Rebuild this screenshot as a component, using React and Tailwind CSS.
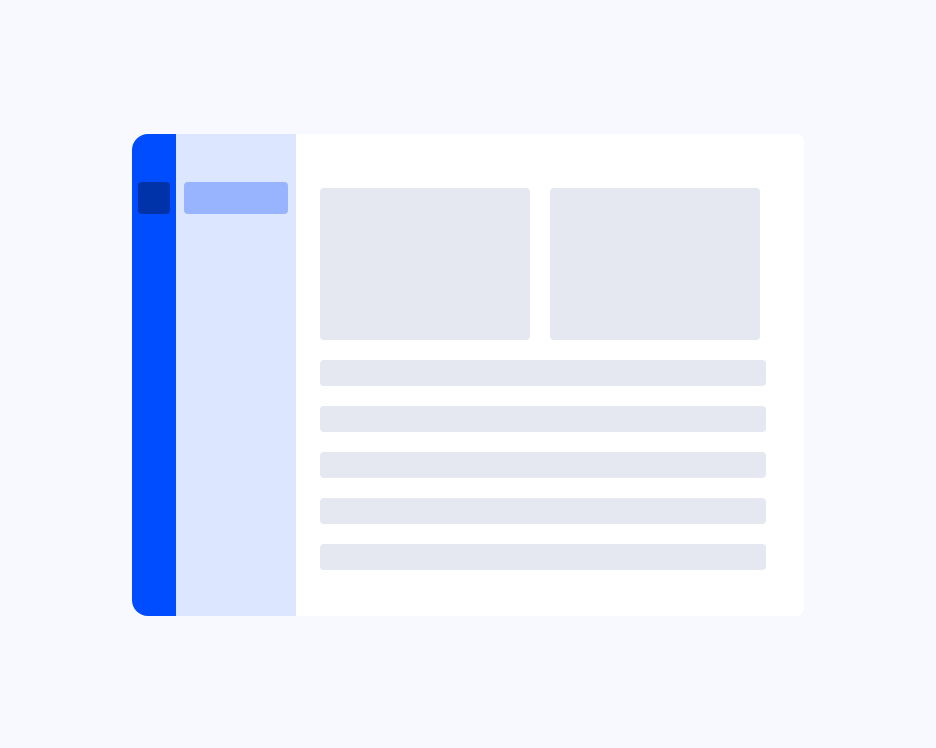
export default function App() {
    const rows = [0, 1, 2, 3, 4];
    return (
        <div className="min-h-[748px] w-full bg-[#f7f9fe] flex items-start justify-center pt-[134px]">
            <div className="flex w-[672px] h-[482px]">
                {/* Rail */}
                <div className="w-[44px] bg-[#004cff] rounded-l-2xl pt-[48px] pl-[6px]">
                    <div className="w-[32px] h-[32px] rounded bg-[#0033aa]" />
                </div>
                {/* Nav panel */}
                <div className="w-[120px] bg-[#dde6ff] pt-[48px] px-[8px]">
                    <div className="h-[32px] rounded bg-[#99b4ff]" />
                </div>
                {/* Content */}
                <div className="flex-1 bg-white rounded-r-lg pt-[54px] pl-[24px] pr-[38px]">
                    <div className="flex gap-[20px]">
                        <div className="w-[210px] h-[152px] rounded bg-[#e5e8f0]" />
                        <div className="w-[210px] h-[152px] rounded bg-[#e5e8f0]" />
                    </div>
                    <div className="mt-[20px] flex flex-col gap-[20px]">
                        {rows.map((r) => (
                            <div key={r} className="h-[26px] rounded bg-[#e5e8f0]" />
                        ))}
                    </div>
                </div>
            </div>
        </div>
    );
}
